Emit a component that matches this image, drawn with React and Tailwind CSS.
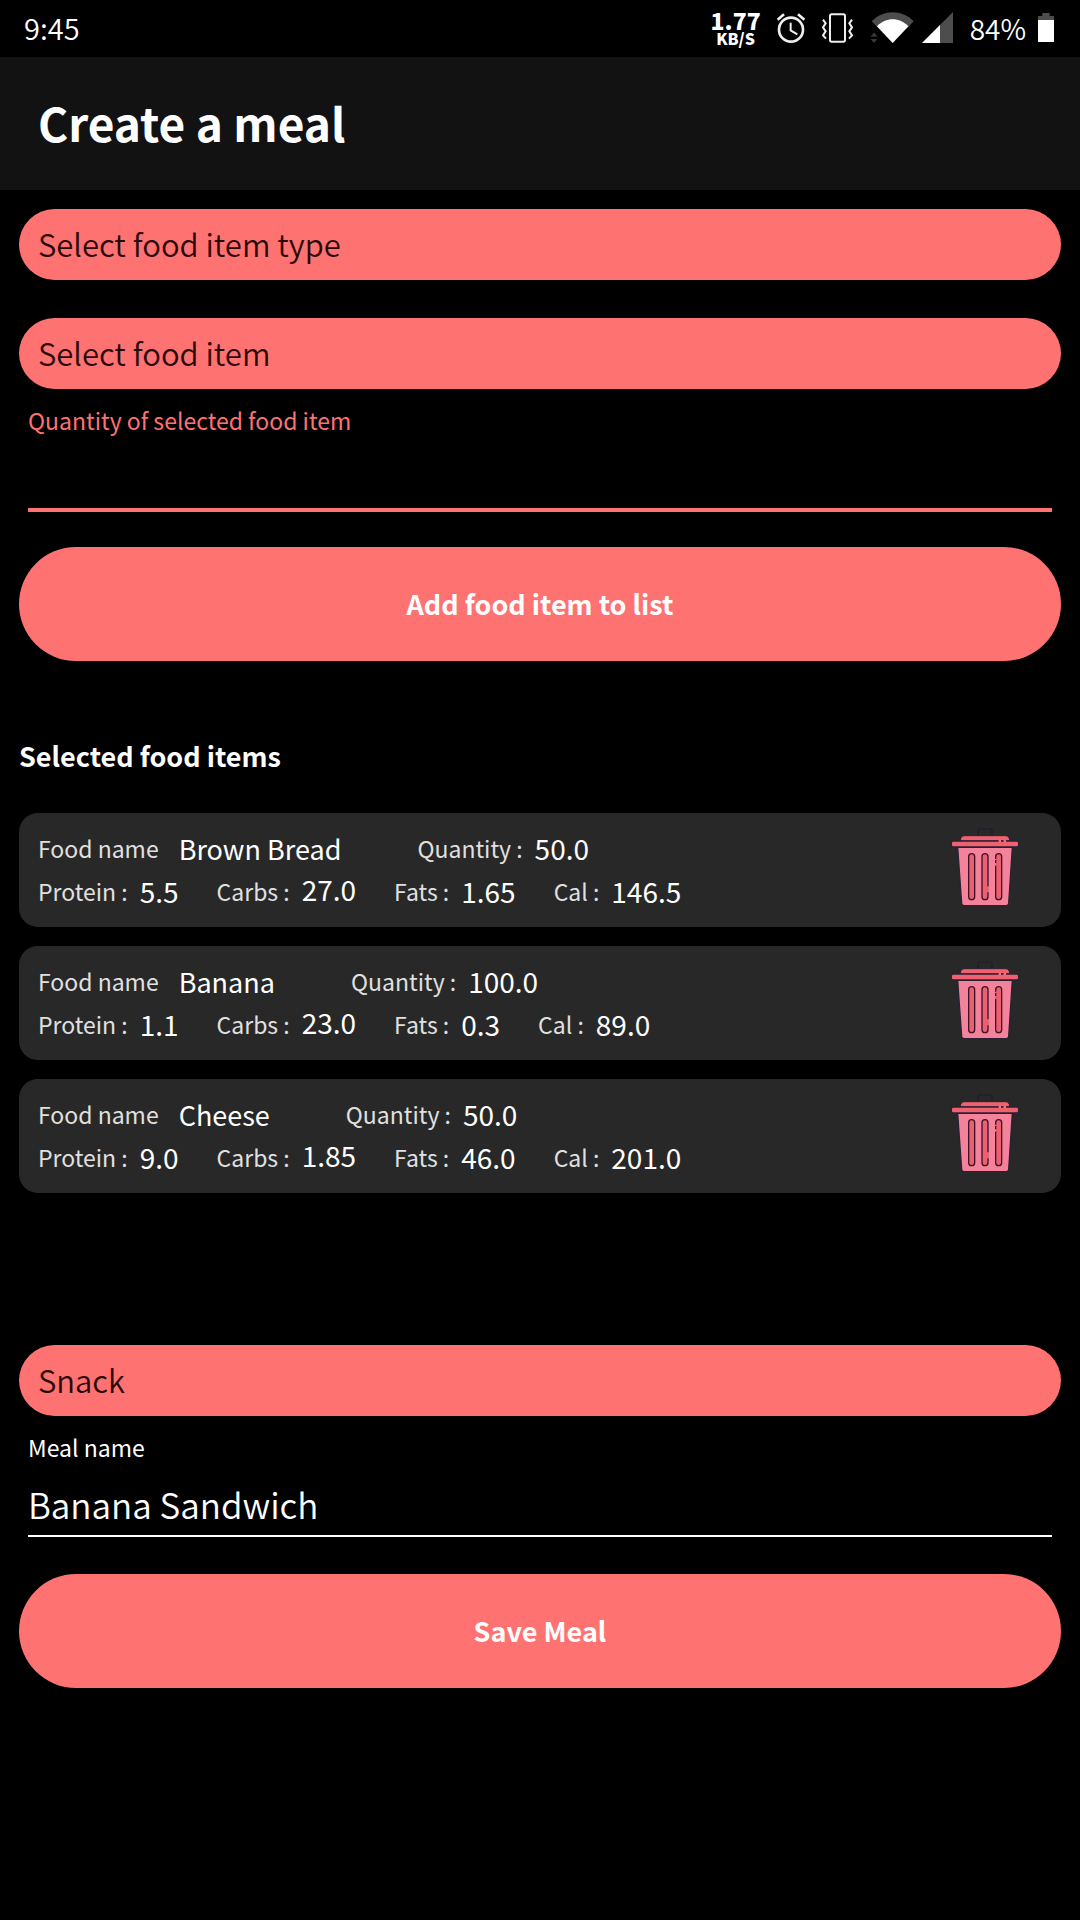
import { useState } from "react";

const initialFoods = [
  { name: "Brown Bread", quantity: "50.0", protein: "5.5", carbs: "27.0", fats: "1.65", cal: "146.5" },
  { name: "Banana", quantity: "100.0", protein: "1.1", carbs: "23.0", fats: "0.3", cal: "89.0" },
  { name: "Cheese", quantity: "50.0", protein: "9.0", carbs: "1.85", fats: "46.0", cal: "201.0" },
];

function AlarmIcon() {
  return (
    <svg viewBox="0 0 84 90" className="h-[30px] w-7" fill="none" stroke="#eee" strokeWidth="8" aria-hidden="true">
      <circle cx="42" cy="50" r="36" />
      <path d="M41 29v23l20 12" strokeWidth="6" />
      <path d="M2 20 21 4M82 20 63 4" strokeWidth="8" />
    </svg>
  );
}

function VibrateIcon() {
  return (
    <svg viewBox="0 0 93 90" className="h-[30px] w-[31px]" fill="none" stroke="#eee" strokeWidth="6" aria-hidden="true">
      <rect x="24" y="4" width="45" height="82" rx="5" />
      <path d="M3 20l8 11-8 12 8 12-8 12 9 10M90 20l-8 11 8 12-8 12 8 12-9 10" />
    </svg>
  );
}

function WifiIcon() {
  return (
    <svg viewBox="0 0 132 93" className="h-[31px] w-11" aria-hidden="true">
      <path d="M5 28C40-8 96-8 131 28L68 93Z" fill="#4d4d4d" />
      <path d="M21 43C48 15 88 15 115 43L68 93Z" fill="#fff" />
      <path d="M0 75 12 60 24 75ZM0 80H24L12 94Z" fill="#3a3a3a" stroke="#000" strokeWidth="2" />
    </svg>
  );
}

function SignalIcon() {
  return (
    <svg viewBox="0 0 93 93" className="h-[31px] w-[31px]" aria-hidden="true">
      <path d="M93 0V93H0Z" fill="#4d4d4d" />
      <path d="M54 39V93H0Z" fill="#fff" />
    </svg>
  );
}

function BatteryIcon() {
  return (
    <svg viewBox="0 0 48 87" className="h-[29px] w-4" aria-hidden="true">
      <path d="M13 0H35V9H48V21H0V9H13Z" fill="#4d4d4d" />
      <path d="M0 21H48V87H0Z" fill="#fff" />
    </svg>
  );
}

function TrashIcon() {
  return (
    <svg viewBox="90 50 210 240" className="h-20 w-[70px]" aria-hidden="true">
      <path d="M174 77V60q0-4 4-4h34q4 0 4 4v17" fill="none" stroke="#20202b" strokeWidth="5" />
      <path d="M113 111H277L266 280q-1 6-7 6H132q-6 0-7-6Z" fill="#f3829a" stroke="#2a2133" strokeWidth="4" />
      <path d="M121 92q0-16 13-16h122q13 0 13 16Z" fill="#f0616f" stroke="#2a2133" strokeWidth="3" />
      <rect x="94" y="92" width="202" height="18" rx="6" fill="#f0616f" stroke="#2a2133" strokeWidth="4" />
      <path d="M236 92h7M251 92h7" stroke="#ff6b76" strokeWidth="8" />
      <g fill="#ec5f70" stroke="#3a1527" strokeWidth="4">
        <rect x="146" y="130" width="18" height="138" rx="9" />
        <rect x="186" y="130" width="18" height="138" rx="9" />
        <rect x="227" y="130" width="18" height="138" rx="9" />
      </g>
      <path d="M227 145v4M227 158v8M204 228v18" stroke="#ff6b76" strokeWidth="5" />
    </svg>
  );
}

function PillSelect({ label, options }) {
  return (
    <select
      aria-label={label}
      className="block h-[71px] w-full appearance-none rounded-full bg-[#ff7272] px-[19px] text-[31px] font-[350] text-[#2a0808] outline-none"
    >
      {options.map((option) => (
        <option key={option}>{option}</option>
      ))}
    </select>
  );
}

function PillButton({ children }) {
  return (
    <button type="button" className="block h-[114px] w-full rounded-full bg-[#ff7272] text-[27px] font-bold text-white">
      {children}
    </button>
  );
}

function Stat({ label, value, raised = false }) {
  return (
    <div className="flex items-start gap-3">
      <dt className="text-[23px] leading-[43px] text-[#e0e0e0]">{label}</dt>
      <dd className={raised ? "text-[28px] leading-[38px] text-white" : "text-[28px] leading-[43px] text-white"}>{value}</dd>
    </div>
  );
}

function FoodCard({ food, onRemove }) {
  return (
    <li className="flex h-[114px] items-start justify-between rounded-[19px] bg-[#282828] pt-3.5 pr-[41px] pl-[19px]">
      <dl>
        <div className="flex gap-[76px]">
          <div className="flex items-start gap-5">
            <dt className="text-[23px] leading-[43px] text-[#e0e0e0]">Food name</dt>
            <dd className="text-[27px] leading-[43px] text-white">{food.name}</dd>
          </div>
          <Stat label="Quantity :" value={food.quantity} />
        </div>
        <div className="flex gap-[38px]">
          <Stat label="Protein :" value={food.protein} />
          <Stat label="Carbs :" value={food.carbs} raised />
          <Stat label="Fats :" value={food.fats} />
          <Stat label="Cal :" value={food.cal} />
        </div>
      </dl>
      <button type="button" aria-label={`Remove ${food.name}`} onClick={onRemove}>
        <TrashIcon />
      </button>
    </li>
  );
}

export default function App() {
  const [foods, setFoods] = useState(initialFoods);
  const [quantity, setQuantity] = useState("");
  const [mealName, setMealName] = useState("Banana Sandwich");

  return (
    <div className="min-h-screen bg-black font-['Noto_Sans_CJK_SC',sans-serif] text-white">
      <div className="flex h-[57px] items-center justify-between pr-[26px] pb-0.5 pl-6 text-[28px] font-[350]">
        <span className="text-[29px]">9:45</span>
        <div className="flex items-center">
          <div className="mr-4 text-center font-black">
            <div className="text-[23px] leading-5">1.77</div>
            <div className="text-base leading-4">KB/S</div>
          </div>
          <div className="mr-[17px]"><AlarmIcon /></div>
          <div className="mr-[17px]"><VibrateIcon /></div>
          <div className="mr-2"><WifiIcon /></div>
          <div className="mr-[17px]"><SignalIcon /></div>
          <span className="mr-3">84%</span>
          <BatteryIcon />
        </div>
      </div>

      <header className="flex h-[133px] items-center bg-[#121212] px-[38px] pb-1">
        <h1 className="text-[46px] leading-[64px] font-bold">Create a meal</h1>
      </header>

      <main className="px-[19px] pt-[19px]">
        <PillSelect label="Food item type" options={["Select food item type", "Bread", "Fruit", "Dairy"]} />
        <div className="mt-[38px]">
          <PillSelect label="Food item" options={["Select food item", "Brown Bread", "Banana", "Cheese"]} />
        </div>

        <div className="mt-4 px-[9px]">
          <label htmlFor="quantity" className="block text-[23px] leading-[30px] text-[#ff7272]">Quantity of selected food item</label>
          <input
            id="quantity"
            inputMode="decimal"
            value={quantity}
            onChange={(e) => setQuantity(e.target.value)}
            className="block h-[77px] w-full border-b-4 border-[#ff7272] bg-transparent pt-2.5 text-[35px] font-[350] outline-none"
          />
        </div>

        <div className="mt-[35px]">
          <PillButton>Add food item to list</PillButton>
        </div>

        <h2 className="mt-[75px] text-[27px] leading-10 font-bold">Selected food items</h2>
        <ul className="mt-[37px] flex min-h-[494px] flex-col gap-[19px]">
          {foods.map((food) => (
            <FoodCard key={food.name} food={food} onRemove={() => setFoods(foods.filter((f) => f !== food))} />
          ))}
        </ul>

        <div className="mt-[38px]">
          <PillSelect label="Meal type" options={["Snack", "Breakfast", "Lunch", "Dinner"]} />
        </div>

        <div className="mt-4 px-[9px]">
          <label htmlFor="meal-name" className="block text-[23px] leading-[30px]">Meal name</label>
          <input
            id="meal-name"
            value={mealName}
            onChange={(e) => setMealName(e.target.value)}
            className="block h-[75px] w-full border-b-2 border-white bg-transparent pt-2.5 text-[35px] font-[350] outline-none"
          />
        </div>

        <div className="mt-[37px]">
          <PillButton>Save Meal</PillButton>
        </div>
      </main>
    </div>
  );
}
